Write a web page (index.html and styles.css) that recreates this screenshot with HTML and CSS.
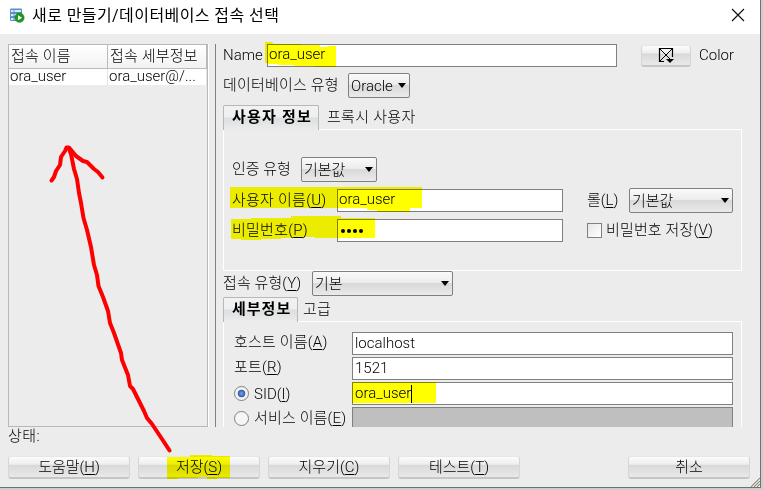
FILE: index.html
```html
<!DOCTYPE html>
<html lang="ko">
<head>
<meta charset="utf-8">
<title>새로 만들기/데이터베이스 접속 선택</title>
<link rel="stylesheet" href="styles.css">
</head>
<body>
<div class="window">
  <header class="titlebar">
    <svg class="app-icon" width="16" height="16" viewBox="0 0 16 16">
      <rect x="1" y="0.500" width="12" height="12.500" rx="1" fill="#5b8fce"/>
      <path d="M2 3h2.500M5.500 3h6.500M2 7h2.500M5.500 7h6.500M2 11h2.500M5.500 11h6.500" stroke="#dceaf8" stroke-width="2"/>
      <circle cx="10.500" cy="9.700" r="4.600" fill="#1d9b1d" stroke="#0b7a12" stroke-width="0.600"/>
      <path d="M9 7.200v5l4-2.500z" fill="#fff"/>
    </svg>
    <h1 class="title">새로 만들기/데이터베이스 접속 선택</h1>
    <svg class="close" width="14" height="14" viewBox="0 0 14 14"><path d="M1 1l12 12M13 1L1 13" stroke="#111" stroke-width="1.200"/></svg>
  </header>
  <main class="main">
    <section class="list">
      <div class="row head"><span>접속 이름</span><span>접속 세부정보</span></div>
      <div class="row"><span>ora_user</span><span>ora_user@/...</span></div>
    </section>
    <section class="editor">
      <div class="line name-line">
        <label class="name-label">Name</label>
        <div class="field name-field">ora_user</div>
        <div class="button color-button">
          <svg width="16" height="16" viewBox="0 0 16 16">
            <path d="M14.500 10V1.500H1.500V14.500H6" fill="none" stroke="#000" stroke-width="1.200"/>
            <path d="M2 2l12 12M14 2L2 14" stroke="#000" stroke-width="1"/>
            <path d="M8 12h8l-4 4z" fill="#000"/>
          </svg>
        </div>
        <label>Color</label>
      </div>
      <div class="line type-line">
        <label class="type-label">데이터베이스 유형</label>
        <div class="select oracle">Oracle</div>
      </div>
      <nav class="tabs"><span class="tab active user-tab">사용자 정보</span><span class="tab">프록시 사용자</span></nav>
      <div class="panel user-panel">
        <div class="line auth-line"><label class="auth-label">인증 유형</label><div class="select auth">기본값</div></div>
        <div class="line user-line">
          <label class="user-label">사용자 이름(<u>U</u>)</label>
          <div class="field user-field">ora_user</div>
          <label class="role-label">롤(<u>L</u>)</label>
          <div class="select role">기본값</div>
        </div>
        <div class="line pass-line">
          <label class="user-label">비밀번호(<u>P</u>)</label>
          <div class="field user-field dots"><i></i><i></i><i></i><i></i></div>
          <span class="check"></span>
          <label>비밀번호 저장(<u>V</u>)</label>
        </div>
      </div>
      <div class="line conn-line"><label class="conn-label">접속 유형(<u>Y</u>)</label><div class="select conn">기본</div></div>
      <nav class="tabs low"><span class="tab active detail-tab">세부정보</span><span class="tab">고급</span></nav>
      <div class="panel detail-panel">
        <div class="line detail"><label class="detail-label">호스트 이름(<u>A</u>)</label><div class="field grow">localhost</div></div>
        <div class="line detail"><label class="detail-label">포트(<u>R</u>)</label><div class="field grow">1521</div></div>
        <div class="line detail"><label class="detail-label option"><span class="radio on"></span><span class="sid">SID(<u>I</u>)</span></label><div class="field grow">ora_user<span class="caret"></span></div></div>
        <div class="line detail"><label class="detail-label option"><span class="radio"></span><span class="service">서비스 이름(<u>E</u>)</span></label><div class="field grow disabled"></div></div>
      </div>
    </section>
  </main>
  <div class="status">상태:</div>
  <footer class="buttons">
    <div class="button">도움말(<u>H</u>)</div>
    <div class="button">저장(<u>S</u>)</div>
    <div class="button">지우기(<u>C</u>)</div>
    <div class="button">테스트(<u>T</u>)</div>
    <div class="button cancel">취소</div>
  </footer>
  <svg class="grip" width="10" height="10" viewBox="0 0 10 10"><path d="M10 0v10H0z" fill="#fff"/><path d="M1 10l9-9M4 10l6-6M7 10l3-3" stroke="#8d8d78" stroke-width="1.200"/></svg>
</div>
<svg class="marks marker" width="763" height="490" viewBox="0 0 763 490" fill="#ff0">
  <path d="M265 42h7l2 2h27v1h19v2h8v-1h8v21h-22v-1h-20v-1h-16v-1h-10v-1h-3z"/>
  <path d="M230 187h192v21h-12v4h-33v-2h-10v-2H230z"/>
  <path d="M231 219h20v-1h40v-2h50v2h34v20h-60v-1h-20v1h-14v1h-20v1h-20v-1h-10v1z"/>
  <path d="M352 382h84v21h-84z"/>
  <path d="M167 457h23v-2h22v1h18v22h-13v1h-10v-2h-9v1h-20v1h-11z"/>
</svg>
<svg class="marks" width="763" height="490" viewBox="0 0 763 490" fill="none" stroke="#f00" stroke-width="4" stroke-linecap="round" stroke-linejoin="round">
  <path d="M169.500 450.500L164 442 152 424 147 418 144 411 133 389 130 386 128 375 122 360 121 353 114 333 110 323 108 311 103 297 98.500 286 97 275 94 265 91 247 87 230 83.500 218 81 203 79 193 77 179 74 169 71 154 68.500 148"/>
  <path d="M51.500 180.500L54 177 56 171 60 165 61 157 65 151 66.500 147.500H69L76 156 83 161 87 162 94 169 98 172 102.500 177.500"/>
</svg>
</body>
</html>
```
FILE: styles.css
```css
* { box-sizing: border-box; }
body {
  margin: 0; width: 763px; height: 490px; overflow: hidden; background: #cdcdcd;
  font: 300 15px/20px Roboto, "Noto Sans CJK KR", sans-serif; color: #000;
}
.window {
  position: relative; width: 761px; height: 488px; background: #ececec;
  border-right: 1px solid #707070; border-bottom: 1px solid #707070;
  display: flex; flex-direction: column; white-space: nowrap;
}
.titlebar { height: 34px; flex: none; background: #fff; display: flex; align-items: center; padding: 0 15px 4px 9px; }
.app-icon { margin-top: 2px; }
.title { margin: 1px 0 0 7px; font-size: 16px; font-weight: 400; line-height: 22px; letter-spacing: 0.42px; flex: 1; }
.main { display: flex; flex: none; height: 393px; padding: 10px 0 0 8px; }
.list { width: 200px; height: 383px; border: 1px solid #b8b8b8; box-shadow: 1px 0 #fff; }
.row { display: grid; grid-template-columns: 99px 99px; height: 16px; line-height: 14px; background: #fff; }
.row span { padding-left: 1px; border-right: 1px solid #e2e2e2; }
.row.head { height: 24px; line-height: 23px; background: linear-gradient(#fff, #f2f2f2); border-bottom: 1px solid #bbb; }
.head span { padding-left: 2px; border-color: #bbb; letter-spacing: 0.2px; }
.editor { margin-left: 7px; padding-left: 7px; width: 527px; height: 383px; border-left: 1px solid #808080; overflow: hidden; }
.line { display: flex; align-items: center; }
label { flex: none; padding-bottom: 2px; }
u { text-underline-offset: 2px; text-decoration-thickness: 1px; }
.field { height: 23px; border: 1px solid #808080; background: #fff; padding: 0 0 2px 1px; line-height: 19px; flex: none; display: flex; align-items: center; }
.field.grow { width: 381px; padding: 0 0 0 2px; }
.field.disabled { background: #bfbfbf; }
.name-line { height: 23px; }
.name-label { width: 44px; }
.name-field { width: 350px; }
.button {
  display: flex; align-items: center; justify-content: center; height: 23px; width: 122px; flex: none;
  border: 1px solid #d6d6d6; border-top-color: #e6e6e6; border-bottom: 2px solid #c6c6c6; border-radius: 3px;
  background: linear-gradient(#fcfcfc 0, #eee 36%, #d9d9d9 42%, #e9e9e9 100%);
}
.color-button { width: 50px; height: 22px; margin: 0 8px 0 24px; }
.select {
  height: 25px; border: 1px solid #808080; border-radius: 2px; flex: none; display: flex; align-items: center;
  justify-content: space-between; padding: 0 3px 0 2px;
  background: linear-gradient(#fafafa 0, #ececec 46%, #d8d8d8 48%, #eaeaea 100%);
}
.select::after { content: ""; border: 4px solid transparent; border-top: 5px solid #000; border-bottom: 0; }
.type-line { margin-top: 6px; height: 25px; }
.type-label { width: 125px; letter-spacing: 0.2px; }
.oracle { width: 62px; }
.tabs { display: flex; height: 24px; margin-top: 7px; line-height: 24px; letter-spacing: 0.3px; }
.tabs.low { margin-top: 1px; }
.tab { padding-left: 8px; }
.tab.active {
  font-weight: 700; padding: 0 0 0 8px; border: 1px solid #b8b8b8; border-bottom: 0; border-radius: 2px 2px 0 0; height: 25px; line-height: 23px;
  background: linear-gradient(#f2f2f2 0, #eeeff0 46%, #dcdee0 50%, #ececec 100%); position: relative; letter-spacing: 1.2px;
}
.user-tab { width: 96px; }
.detail-tab { width: 75px; }
.tab.detail-tab { letter-spacing: 1px; }
.detail-tab + .tab { padding-left: 5px; }
.panel { width: 519px; border: 1px solid #fff; }
.user-panel { height: 142px; padding: 27px 0 0 8px; }
.auth-line { height: 25px; }
.auth-label { width: 69px; }
.auth { width: 76px; }
.user-line { height: 25px; margin-top: 6px; }
.user-label { width: 105px; letter-spacing: 0.25px; }
.user-field { width: 226px; }
.role-label { margin-left: 24px; width: 42px; }
.role { width: 104px; }
.pass-line { height: 23px; margin-top: 6px; }
.dots { gap: 2px; padding: 0 0 0 3px; }
.dots i { width: 4px; height: 4px; border-radius: 50%; background: #000; }
.check { width: 15px; height: 15px; margin: 0 4px 0 24px; border: 1px solid #808080; background: linear-gradient(135deg, #e6e6e6, #fff); }
.check + label { letter-spacing: 0.15px; }
.conn-line { height: 25px; }
.conn-label { width: 89px; letter-spacing: 0.1px; }
.conn { width: 141px; }
.detail-panel { height: 150px; padding: 10px 0 0 10px; display: flex; flex-direction: column; gap: 2px; }
.detail { height: 23px; }
.detail-label { width: 118px; padding-bottom: 4px; letter-spacing: 0.2px; }
.option { display: flex; align-items: center; padding-bottom: 0; }
.sid { letter-spacing: 0; }
.service { letter-spacing: 0.15px; padding-bottom: 1px; }
.radio { width: 15px; height: 15px; border: 1px solid #808080; border-radius: 50%; background: #f6f6f6; margin-right: 5px; flex: none; }
.radio.on { background: radial-gradient(circle at 50% 50%, #78a0e4 0, #315fae 3.500px, #f4f4f4 4.200px); }
.caret { width: 1px; height: 18px; background: #000; }
.status { height: 29px; padding-left: 8px; line-height: 18px; letter-spacing: 0.4px; }
.buttons { display: flex; gap: 8px; padding-left: 8px; }
.cancel { margin-left: 100px; }
.grip { position: absolute; right: 0; bottom: 0; }
.marks { position: absolute; left: 0; top: 0; }
.marker { mix-blend-mode: multiply; }
```
